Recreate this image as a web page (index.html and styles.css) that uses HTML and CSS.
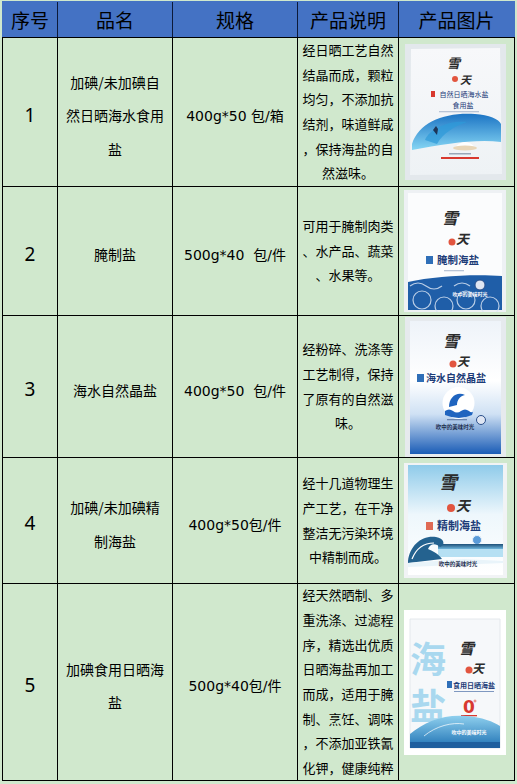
FILE: index.html
```html
<!DOCTYPE html>
<html lang="zh-CN">
<head>
<meta charset="utf-8">
<title>产品列表</title>
<link rel="stylesheet" href="styles.css">
</head>
<body>
<div class="sheet">
  <div class="h">序号</div>
  <div class="h hs">品名</div>
  <div class="h hs">规格</div>
  <div class="h hs">产品说明</div>
  <div class="h hs">产品图片</div>

  <div class="c num">1</div>
  <div class="c name">加碘/未加碘自<br>然日晒海水食用<br>盐</div>
  <div class="c spec">400g*50 包/箱</div>
  <div class="c desc"><div>经日晒工艺自然<br>结晶而成，颗粒<br>均匀，不添加抗<br>结剂，味道鲜咸<br>，保持海盐的自<br>然滋味。</div></div>
  <div class="c pic">
    <svg width="101" height="136" viewBox="0 0 101 136">
      <defs>
        <linearGradient id="w1" x1="0" y1="0" x2="0" y2="1"><stop offset="0" stop-color="#1c74c4"/><stop offset="1" stop-color="#86d6f4"/></linearGradient>
        <linearGradient id="b1" x1="0" y1="0" x2="0" y2="1"><stop offset="0" stop-color="#f7f8fa"/><stop offset="1" stop-color="#eef2f5"/></linearGradient>
      </defs>
      <rect width="101" height="136" fill="#e3e8ec"/>
      <path d="M6 5 L95 4 L97 130 L5 131 Z" fill="url(#b1)"/>
      <text x="42" y="24" class="logo" font-size="13">雪</text>
      <text x="55" y="40" class="logo" font-size="11">天</text>
      <circle cx="50" cy="35" r="3" fill="#e2553f"/>
      <rect x="26" y="47" width="4" height="6" fill="#d8392f"/>
      <text x="59" y="53" class="lbl" font-size="7" text-anchor="middle">自然日晒海水盐</text>
      <text x="58" y="64" class="lbl" font-size="7" text-anchor="middle">食用盐</text>
      <rect x="34" y="67" width="40" height="1.3" fill="#b8c4d6"/>
      <path d="M7 100 C 14 78, 40 68, 70 70 C 84 71, 94 75, 96 80 L96 98 C 70 95, 40 100, 7 106 Z" fill="url(#w1)"/>
      <path d="M20 96 C 25 84, 45 76, 62 78 C 50 82, 38 89, 32 100 Z" fill="#2e9ad8" opacity="0.7"/>
      <path d="M28 86 l3 -4 l2 3 l-1 6 z" fill="#1d3557"/>
      <path d="M49 104 Q 60 92 71 104 Z" fill="#ffffff"/>
      <ellipse cx="60" cy="104" rx="12" ry="2.5" fill="#e8d6b8"/>
      <rect x="44" y="109" width="22" height="1.5" fill="#9aa7b8"/>
      <rect x="36" y="113" width="38" height="2" fill="#d8392f"/>
    </svg>
  </div>

  <div class="c num">2</div>
  <div class="c name">腌制盐</div>
  <div class="c spec">500g*40&nbsp; 包/件</div>
  <div class="c desc"><div>可用于腌制肉类<br>、水产品、蔬菜<br>、水果等。</div></div>
  <div class="c pic">
    <svg width="102" height="122" viewBox="0 0 102 122">
      <rect width="102" height="122" fill="#eef1f4"/>
      <path d="M4 3 L98 3 L98 120 L4 120 Z" fill="#fbfcfd"/>
      <text x="38" y="34" class="logo" font-size="16">雪</text>
      <text x="52" y="54" class="logo" font-size="13">天</text>
      <circle cx="48" cy="52" r="3.5" fill="#e2553f"/>
      <rect x="22" y="66" width="7" height="8" fill="#2f6fb8"/>
      <text x="54" y="74" class="lbl b" font-size="10.5" text-anchor="middle">腌制海盐</text>
      <rect x="40" y="80" width="20" height="1.3" fill="#b8c4d6"/>
      <path d="M4 92 C 30 86, 70 84, 98 86 L98 120 L4 120 Z" fill="#1f5ea8"/>
      <g fill="none" stroke="#dfe9f6" stroke-width="1.2" opacity="0.8">
        <circle cx="18" cy="110" r="9"/><circle cx="40" cy="116" r="9"/><circle cx="62" cy="110" r="9"/><circle cx="86" cy="116" r="9"/>
        <path d="M6 96 q 8 -6 16 0 q 8 6 16 0"/><path d="M50 96 q 8 -6 16 0"/>
      </g>
      <circle cx="76" cy="95" r="5" fill="#dfe6f3" stroke="#2a4f8a" stroke-width="1"/>
      <text x="66" y="106" class="scr" font-size="5" text-anchor="middle">吹中的美味时光</text>
    </svg>
  </div>

  <div class="c num">3</div>
  <div class="c name">海水自然晶盐</div>
  <div class="c spec">400g*50&nbsp; 包/件</div>
  <div class="c desc"><div>经粉碎、洗涤等<br>工艺制得，保持<br>了原有的自然滋<br>味。</div></div>
  <div class="c pic">
    <svg width="101" height="140" viewBox="0 0 101 140">
      <defs>
        <linearGradient id="g3" x1="0" y1="0" x2="0" y2="1"><stop offset="0" stop-color="#eef3f9"/><stop offset="0.45" stop-color="#ffffff"/><stop offset="0.7" stop-color="#cfe1f4"/><stop offset="1" stop-color="#1a5cb6"/></linearGradient>
      </defs>
      <rect width="101" height="140" fill="#e6eaee"/>
      <path d="M5 4 L96 4 L96 137 L5 137 Z" fill="url(#g3)"/>
      <text x="38" y="30" class="logo" font-size="16">雪</text>
      <text x="52" y="49" class="logo" font-size="12">天</text>
      <circle cx="48" cy="47" r="3.5" fill="#e2553f"/>
      <rect x="12" y="57" width="7" height="8" fill="#2f6fb8"/>
      <text x="51" y="65" class="lbl b" font-size="10" text-anchor="middle">海水自然晶盐</text>
      <circle cx="53.5" cy="86" r="16" fill="#ffffff"/>
      <path d="M44 90 C 44 80, 52 74, 60 78 C 55 79, 52 83, 52 88 Z" fill="#1f64bf"/>
      <path d="M40 94 q 4 -3 8 0 q 4 3 8 0 q 4 -3 8 0 q 2 2 4 1 L67 98 q -13 6 -27 0 Z" fill="#1f64bf"/>
      <circle cx="76" cy="103" r="4.5" fill="#dfe6f3" stroke="#2a4f8a" stroke-width="1"/>
      <rect x="42" y="102" width="20" height="1.3" fill="#6a86b0"/>
      <text x="50" y="112" class="scr2" font-size="5.5" text-anchor="middle">吹中的美味时光</text>
    </svg>
  </div>

  <div class="c num">4</div>
  <div class="c name">加碘/未加碘精<br>制海盐</div>
  <div class="c spec">400g*50包/件</div>
  <div class="c desc"><div>经十几道物理生<br>产工艺，在干净<br>整洁无污染环境<br>中精制而成。</div></div>
  <div class="c pic">
    <svg width="103" height="115" viewBox="0 0 103 115">
      <defs>
        <linearGradient id="g4" x1="0" y1="0" x2="0" y2="1"><stop offset="0" stop-color="#8fcbea"/><stop offset="0.45" stop-color="#eef7fc"/><stop offset="1" stop-color="#ffffff"/></linearGradient>
        <linearGradient id="s4" x1="0" y1="0" x2="0" y2="1"><stop offset="0" stop-color="#1d4f78"/><stop offset="1" stop-color="#6fb6dc"/></linearGradient>
      </defs>
      <rect width="103" height="115" fill="#f1f3f5"/>
      <path d="M4 2 L99 2 L99 112 L4 112 Z" fill="url(#g4)"/>
      <text x="35" y="26" class="logo" font-size="18">雪</text>
      <text x="52" y="48" class="logo" font-size="14">天</text>
      <circle cx="47" cy="45" r="4" fill="#e2553f"/>
      <rect x="22" y="59" width="7" height="8" fill="#e06a55"/>
      <text x="55" y="67" class="lbl b" font-size="11" text-anchor="middle">精制海盐</text>
      <circle cx="73" cy="77" r="4.5" fill="#5b9bd8" stroke="#e6f0fa" stroke-width="1"/>
      <rect x="34" y="81" width="65" height="5" fill="url(#s4)"/>
      <rect x="34" y="86" width="65" height="8" fill="#b6e0f3"/>
      <path d="M4 98 C 6 82, 18 72, 32 74 C 40 75, 42 82, 36 84 C 32 80, 26 80, 24 86 C 28 88, 34 90, 38 96 L4 100 Z" fill="#24628f"/>
      <path d="M8 96 C 12 86, 20 80, 30 80" fill="none" stroke="#ffffff" stroke-width="1.2"/>
      <path d="M4 100 L60 96 L99 98 L99 100 L4 104 Z" fill="#e9f4fa"/>
      <text x="54" y="103" class="scr2" font-size="5.5" text-anchor="middle">吹中的美味时光</text>
    </svg>
  </div>

  <div class="c num">5</div>
  <div class="c name">加碘食用日晒海<br>盐</div>
  <div class="c spec">500g*40包/件</div>
  <div class="c desc"><div>经天然晒制、多<br>重洗涤、过滤程<br>序，精选出优质<br>日晒海盐再加工<br>而成，适用于腌<br>制、烹饪、调味<br>，不添加亚铁氰<br>化钾，健康纯粹</div></div>
  <div class="c pic">
    <svg width="102" height="145" viewBox="0 0 102 145">
      <defs>
        <linearGradient id="w5" x1="0" y1="0" x2="0" y2="1"><stop offset="0" stop-color="#8fd0ee"/><stop offset="1" stop-color="#1f72b4"/></linearGradient>
      </defs>
      <rect width="102" height="145" fill="#ffffff"/>
      <path d="M6 9 L96 9 L96 138 L6 138 Z" fill="#f6f8fa" stroke="#e4e8ec" stroke-width="1"/>
      <text x="6" y="63" class="big" font-size="36">海</text>
      <text x="6" y="110" class="big" font-size="36">盐</text>
      <text x="55" y="44" class="logo" font-size="15">雪</text>
      <text x="68" y="63" class="logo" font-size="12">天</text>
      <circle cx="65" cy="60" r="3.5" fill="#e2553f"/>
      <rect x="43" y="71" width="5" height="7" fill="#2f6fb8"/>
      <text x="70" y="78" class="lbl b" font-size="7" text-anchor="middle">食用日晒海盐</text>
      <rect x="50" y="81" width="40" height="1" fill="#7f98c0"/>
      <text x="65" y="103" class="zero" font-size="17" text-anchor="middle">0</text>
      <circle cx="71" cy="91" r="1" fill="none" stroke="#d8392f" stroke-width="0.6"/>
      <rect x="57" y="105" width="16" height="1.3" fill="#d8392f"/>
      <path d="M6 124 C 20 112, 40 104, 62 106 C 78 107, 90 112, 96 116 L96 138 L6 138 Z" fill="url(#w5)"/>
      <path d="M20 126 C 32 116, 48 112, 60 114" fill="none" stroke="#ffffff" stroke-width="1" opacity="0.7"/>
      <text x="65" y="124" class="scr" font-size="5" text-anchor="middle">吹中的美味时光</text>
      <rect x="6" y="132" width="90" height="6" fill="#1f5f9e"/>
    </svg>
  </div>
</div>
</body>
</html>
```

FILE: styles.css
```css
html, body {
  margin: 0;
  padding: 0;
  background: #d0e8cd;
}

body {
  padding: 1px 0 0 2px;
  font-family: "Noto Sans CJK SC", "Noto Sans", sans-serif;
  color: #000;
}

.sheet {
  display: grid;
  grid-template-columns: 54px 114px 124px 100px 115px;
  grid-template-rows: 35px 148px 128px 141px 125px 196px;
  gap: 1px;
  padding: 1px;
  width: max-content;
  background: linear-gradient(to bottom, #4472c4 0, #4472c4 36px, #000 36px, #000 100%);
}

.h {
  background: #4472c4;
  display: flex;
  align-items: center;
  justify-content: center;
  font-size: 19px;
  line-height: 1;
  padding-bottom: 1px;
}

.hs {
  box-shadow: -1px 0 0 #0c1a3a;
}

.c {
  background: #d0e8cd;
  display: flex;
  align-items: center;
  justify-content: center;
  text-align: center;
  overflow: hidden;
}

.num {
  font-family: "Noto Sans", sans-serif;
  font-size: 19px;
  padding-top: 5px;
  box-sizing: border-box;
}

.name {
  font-size: 14px;
  line-height: 33.5px;
  padding-top: 8px;
  box-sizing: border-box;
}

.spec {
  font-family: "DejaVu Sans", "Noto Sans CJK SC", sans-serif;
  font-size: 14px;
  padding-top: 6px;
  box-sizing: border-box;
  white-space: nowrap;
}

.desc {
  font-size: 13px;
  line-height: 24.7px;
  white-space: nowrap;
}

.pic {
  padding-right: 3px;
  box-sizing: border-box;
}

.pic svg {
  display: block;
}

.logo {
  font-family: "Noto Sans CJK SC", sans-serif;
  font-weight: 700;
  fill: #2b2b2b;
  font-style: italic;
}

.lbl {
  font-family: "Noto Sans CJK SC", sans-serif;
  fill: #1d3c78;
}

.lbl.b {
  font-weight: 700;
}

.scr {
  font-family: "Noto Sans CJK SC", sans-serif;
  fill: #ffffff;
  font-weight: 700;
}

.scr2 {
  font-family: "Noto Sans CJK SC", sans-serif;
  fill: #1d2f4f;
  font-weight: 700;
}

.big {
  font-family: "Noto Sans CJK SC", sans-serif;
  fill: #a9d8ef;
  font-weight: 700;
}

.zero {
  font-family: "DejaVu Sans", sans-serif;
  fill: #d8392f;
  font-weight: 700;
}
```
